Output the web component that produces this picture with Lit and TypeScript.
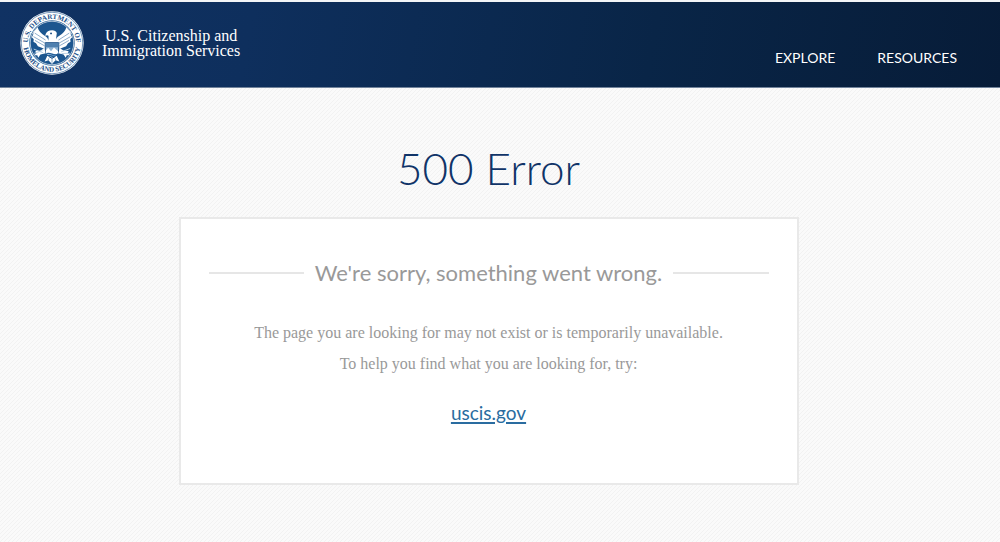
import { LitElement, html, css } from "lit";
import { customElement } from "lit/decorators.js";

@customElement("agency-seal")
class AgencySeal extends LitElement {
  static styles = css`
    :host { display: block; width: 64px; height: 64px; flex: none; }
    svg { display: block; width: 100%; height: 100%; }
    .ring { font: 700 22px "Liberation Serif", serif; fill: #1c4f88; }
  `;
  render() {
    return html`<svg viewBox="0 0 200 200" role="img" aria-label="U.S. Department of Homeland Security">
      <defs>
        <path id="upper" d="M38 142 A75 75 0 1 1 162 142" />
        <path id="lower" d="M10 100 A90 90 0 0 0 190 100" />
        <clipPath id="shield"><path d="M79 99h42v20q0 20-21 29q-21-9-21-29z" /></clipPath>
      </defs>
      <circle cx="100" cy="100" r="99" fill="#fff" />
      <circle cx="100" cy="100" r="96" fill="none" stroke="#2c5f96" stroke-width="2" />
      <text class="ring" text-anchor="middle"><textPath href="#upper" startOffset="50%">U.S. DEPARTMENT OF</textPath></text>
      <text class="ring" text-anchor="middle"><textPath href="#lower" startOffset="50%">HOMELAND SECURITY</textPath></text>
      <circle cx="100" cy="100" r="71" fill="#1c568f" />
      <circle cx="100" cy="100" r="68" fill="none" stroke="#fff" stroke-width="2" />
      <g fill="#fff">
        <path d="M55 51Q60 68 77 77Q88 82 89 96L77 119L64 113L56 110L50 101L42 96L43 88L37 82L41 75L42 66Z" />
        <path d="M145 51Q140 68 123 77Q112 82 111 96L123 119L136 113L144 110L150 101L158 96L157 88L163 82L159 75L158 66Z" />
        <path d="M86 100Q91 88 89 77Q84 74 79 78Q80 65 93 61Q110 57 115 69L113 84Q113 94 117 100Z" />
        <path d="M79 114L63 124L48 125L51 132L43 138L54 138L57 146L64 136L81 132Z" />
        <path d="M121 114L137 124L152 125L149 132L157 138L146 138L143 146L136 136L119 132Z" />
        <path d="M85 141L77 158L89 154L100 166L111 154L123 158L115 141Z" />
      </g>
      <g fill="none" stroke="#4f80af" stroke-width="2">
        <path d="M46 69L80 91M42 80L79 101M47 92L77 109M154 69L120 91M158 80L121 101M153 92L123 109" />
        <path d="M90 148L88 155M100 149V162M110 148L112 155" />
      </g>
      <path d="M79 99h42v20q0 20-21 29q-21-9-21-29z" fill="#8fb3d3" stroke="#174b83" stroke-width="3" />
      <g clip-path="url(#shield)">
        <path d="M78 98h44v15h-44z" fill="#4f80af" />
        <path d="M78 126L88 115L97 126L106 114L123 129V135H78Z" fill="#fff" />
        <path d="M78 135q11-5 22 0t22 0M83 141q9-4 17 0t17 0" fill="none" stroke="#235f99" stroke-width="4" />
      </g>
      <circle cx="97" cy="70" r="3" fill="#174b83" />
      <path d="M43 119L73 131M45 132L70 124M128 128L157 117M130 133L156 132" stroke="#b8d0e4" stroke-width="3" />
    </svg>`;
  }
}

@customElement("app-root")
class AppRoot extends LitElement {
  static styles = css`
    :host {
      display: flex; flex-direction: column; box-sizing: border-box; min-height: 100vh;
      border-top: 2px solid #f3f5f7;
      font-family: Lato, "Open Sans", sans-serif; color: #999;
      background: url("data:image/svg+xml,%3Csvg xmlns='http://www.w3.org/2000/svg' width='4' height='4'%3E%3Cpath fill='%23fafafa' d='M0 0h4v4H0z'/%3E%3Cpath stroke='%23f2f2f2' d='M-1 1L1-1M0 4L4 0M3 5L5 3'/%3E%3C/svg%3E");
    }
    header {
      display: flex; align-items: center; justify-content: space-between;
      box-sizing: border-box; height: 86px; padding: 0 43px 4px 20px;
      border-bottom: 1px solid #71839b;
      background: linear-gradient(100deg, #103263 0%, #0e2f5d 25%, #092547 65%, #071c38 100%);
    }
    a { color: inherit; text-decoration: none; }
    .brand { display: flex; align-items: center; gap: 18px; color: #fff; }
    .name { font: 16px/15px "Liberation Serif", serif; text-align: center; }
    nav { display: flex; gap: 42px; margin-top: 31px; color: #fff; font-size: 14px; line-height: 20px; }
    main { padding: 52px 23px 54px 0; text-align: center; }
    h1 { margin: 0 0 21px; font-size: 44px; line-height: 56px; font-weight: 300; color: #103468; }
    .card {
      box-sizing: border-box; max-width: 620px; margin: 0 auto; padding: 38px 28px 57px;
      border: 2px solid #e9e9e9; background: #fff;
    }
    h2 {
      display: flex; align-items: center; gap: 11px; margin: 0 0 28px;
      font-size: 22px; line-height: 32px; font-weight: 400;
    }
    h2::before, h2::after { content: ""; flex: 1; border-top: 2px solid #e6e6e6; }
    p { margin: 0; font: 16px/31px "Liberation Serif", serif; }
    .home { display: inline-block; margin-top: 21px; font-size: 19px; line-height: 26px; color: #2a6ca0; text-decoration: underline; text-decoration-thickness: 2px; text-underline-offset: 2px; }
  `;
  render() {
    return html`
      <header>
        <a class="brand" href="#">
          <agency-seal></agency-seal>
          <span class="name">U.S. Citizenship and<br />Immigration Services</span>
        </a>
        <nav aria-label="Main"><a href="#explore">EXPLORE</a><a href="#resources">RESOURCES</a></nav>
      </header>
      <main>
        <h1>500 Error</h1>
        <section class="card">
          <h2>We're sorry, something went wrong.</h2>
          <p>The page you are looking for may not exist or is temporarily unavailable.</p>
          <p>To help you find what you are looking for, try:</p>
          <a class="home" href="https://uscis.gov">uscis.gov</a>
        </section>
      </main>`;
  }
}
